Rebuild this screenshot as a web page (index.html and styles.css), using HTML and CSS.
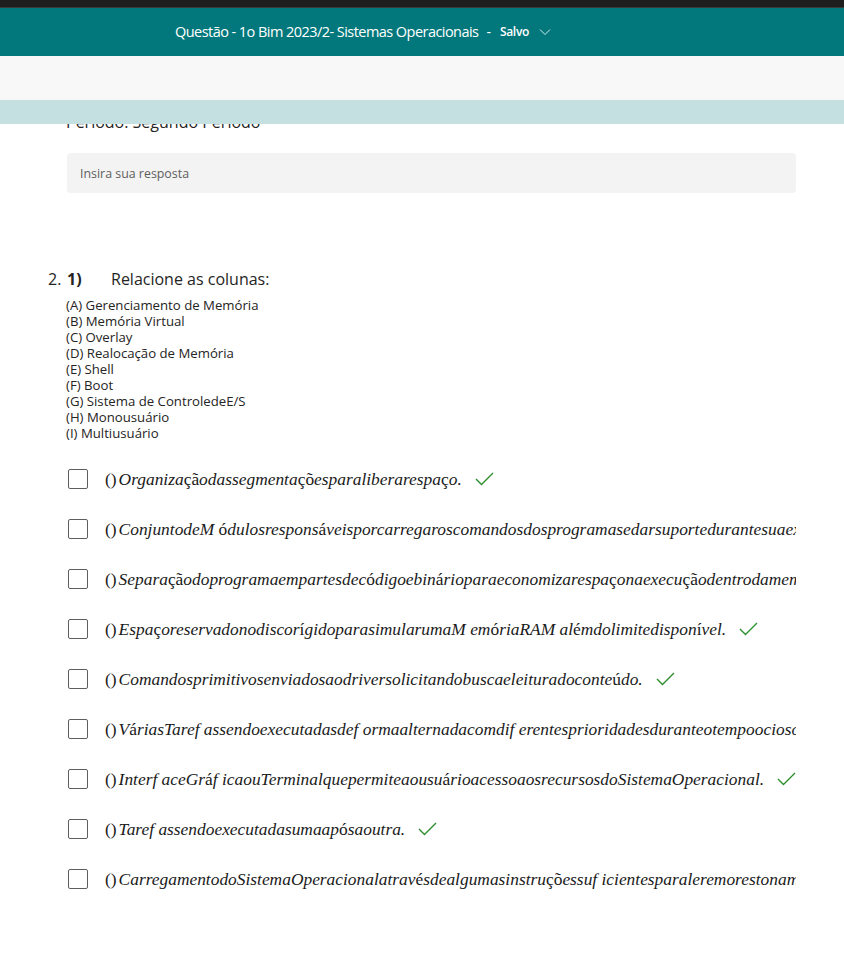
FILE: index.html
```html
<!DOCTYPE html>
<html lang="pt">
<head>
<meta charset="utf-8">
<title>Questão - 1o Bim 2023/2- Sistemas Operacionais</title>
<link rel="stylesheet" href="styles.css">
</head>
<body>
<div class="topstrip"></div>
<header class="titlebar">
  <span class="title">Questão - 1o Bim 2023/2- Sistemas Operacionais</span>
  <span class="sep">-</span>
  <span class="saved">Salvo</span>
  <svg class="chev" width="12" height="8" viewBox="0 0 12 8"><polyline points="1,1.5 6,6.5 11,1.5" fill="none" stroke="#d6ecec" stroke-width="1"/></svg>
</header>
<div class="ribbon"></div>
<main class="main">
  <div class="overlay-bar"></div>
  <div class="period">Período: Segundo Período</div>
  <div class="answer">Insira sua resposta</div>

  <section class="question">
    <div class="qhead">
      <span class="qnum">2.</span>
      <span class="qlabel">1)</span>
      <span class="qtitle">Relacione as colunas:</span>
    </div>
    <div class="legend">
      <div>(A) Gerenciamento de Memória</div>
      <div>(B) Memória Virtual</div>
      <div>(C) Overlay</div>
      <div>(D) Realocação de Memória</div>
      <div>(E) Shell</div>
      <div>(F) Boot</div>
      <div>(G) Sistema de ControledeE/S</div>
      <div>(H) Monousuário</div>
      <div>(I) Multiusuário</div>
    </div>
    <div class="options">
      <label class="opt"><span class="box"></span><span class="txt"><span class="par">()</span>Organiza<span class="up">çã</span>odassegmenta<span class="up">çõ</span>esparaliberarespa<span class="up">ç</span>o.<svg class="ok" width="19" height="14" viewBox="0 0 19 14"><polyline points="1,7 6.5,12.5 18,1" fill="none" stroke="#2c8f2c" stroke-width="1.4"/></svg></span></label>
      <label class="opt"><span class="box"></span><span class="txt"><span class="par">()</span>ConjuntodeM <span class="up">ó</span>dulosrespons<span class="up">á</span>veisporcarregaroscomandosdosprogramasedarsuportedurantesuaexecu<span class="up">çã</span>o.</span></label>
      <label class="opt"><span class="box"></span><span class="txt"><span class="par">()</span>Separa<span class="up">çã</span>odoprogramaempartesdec<span class="up">ó</span>digoebin<span class="up">á</span>rioparaeconomizarespa<span class="up">ç</span>onaexecu<span class="up">çã</span>odentrodamem<span class="up">ó</span>ria.</span></label>
      <label class="opt"><span class="box"></span><span class="txt"><span class="par">()</span>Espa<span class="up">ç</span>oreservadonodiscor<span class="up">í</span>gidoparasimularumaM em<span class="up">ó</span>riaRAM al<span class="up">é</span>mdolimitedispon<span class="up">í</span>vel.<svg class="ok" width="19" height="14" viewBox="0 0 19 14"><polyline points="1,7 6.5,12.5 18,1" fill="none" stroke="#2c8f2c" stroke-width="1.4"/></svg></span></label>
      <label class="opt"><span class="box"></span><span class="txt"><span class="par">()</span>Comandosprimitivosenviadosaodriversolicitandobuscaeleituradoconte<span class="up">ú</span>do.<svg class="ok" width="19" height="14" viewBox="0 0 19 14"><polyline points="1,7 6.5,12.5 18,1" fill="none" stroke="#2c8f2c" stroke-width="1.4"/></svg></span></label>
      <label class="opt"><span class="box"></span><span class="txt"><span class="par">()</span>V<span class="up">á</span>riasTaref assendoexecutadasdef ormaalternadacomdif erentesprioridadesduranteotempoociosodoprocessador.</span></label>
      <label class="opt"><span class="box"></span><span class="txt"><span class="par">()</span>Interf aceGr<span class="up">á</span>f icaouTerminalquepermiteaousu<span class="up">á</span>rioacessoaosrecursosdoSistemaOperacional.<svg class="ok" width="19" height="14" viewBox="0 0 19 14"><polyline points="1,7 6.5,12.5 18,1" fill="none" stroke="#2c8f2c" stroke-width="1.4"/></svg></span></label>
      <label class="opt"><span class="box"></span><span class="txt"><span class="par">()</span>Taref assendoexecutadasumaap<span class="up">ó</span>saoutra.<svg class="ok" width="19" height="14" viewBox="0 0 19 14"><polyline points="1,7 6.5,12.5 18,1" fill="none" stroke="#2c8f2c" stroke-width="1.4"/></svg></span></label>
      <label class="opt"><span class="box"></span><span class="txt"><span class="par">()</span>CarregamentodoSistemaOperacionalatrav<span class="up">é</span>sdealgumasinstru<span class="up">çõ</span>essuf icientesparaleremorestonamem<span class="up">ó</span>ria.</span></label>
    </div>
  </section>
</main>
</body>
</html>
```

FILE: styles.css
```css
* { box-sizing: border-box; }
html, body { margin: 0; padding: 0; background: #ffffff; }
body {
  font-family: "Segoe UI", "Open Sans", "Noto Sans", sans-serif;
  color: #252423;
  overflow: hidden;
}
.topstrip {
  height: 8px;
  background: #1e1e1e;
  border-bottom: 1px solid #3a3a3a;
}
.titlebar {
  height: 48px;
  background: #03787c;
  color: #ffffff;
  display: flex;
  align-items: center;
  padding-left: 175px;
  padding-bottom: 1px;
}
.title {
  font-size: 14.5px;
  letter-spacing: -0.55px;
}
.sep {
  font-size: 14px;
  margin: 0 9px 0 8px;
}
.saved {
  font-size: 12px;
  font-weight: 600;
  letter-spacing: -0.3px;
}
.chev { margin-left: 10px; margin-top: 1px; }
.ribbon {
  height: 44px;
  background: #f8f8f8;
}
.main {
  position: relative;
  padding: 10px 48px 0 67px;
}
.overlay-bar {
  position: absolute;
  left: 0;
  right: 0;
  top: 0;
  height: 24px;
  background: #c5e0e0;
}
.period {
  margin-left: -1px;
  font-size: 16px;
  line-height: 24px;
  color: #252423;
}
.answer {
  margin-top: 19px;
  height: 40px;
  background: #f3f3f3;
  border-radius: 4px;
  display: flex;
  align-items: center;
  padding-left: 13px;
  font-size: 12.4px;
  color: #605e5c;
}
.question { margin-top: 74px; }
.qhead {
  display: flex;
  align-items: baseline;
  margin-left: -19px;
  font-size: 16px;
  line-height: 24px;
}
.qnum { width: 19px; font-size: 16px; }
.qlabel { width: 44px; font-weight: 700; font-size: 16px; }
.qtitle { font-size: 16px; }
.legend {
  margin-top: 6px;
  margin-left: -1px;
  font-size: 13.2px;
  line-height: 16px;
}
.options {
  margin-top: 28px;
  display: flex;
  flex-direction: column;
  gap: 30px;
}
.opt {
  display: flex;
  align-items: center;
  height: 20px;
}
.box {
  flex: none;
  width: 20px;
  height: 20px;
  margin-left: 1px;
  border: 1px solid #605e5c;
  border-radius: 2px;
  background: #fff;
}
.txt {
  margin-left: 17px;
  min-width: 0;
  flex: 1;
  overflow: hidden;
  white-space: nowrap;
  font-family: "Liberation Serif", "Times New Roman", serif;
  font-style: italic;
  font-size: 17.4px;
  line-height: 20px;
  color: #1a1a1a;
}
.par { font-style: normal; margin-right: 2px; }
.up { font-style: normal; }
.ok {
  margin-left: 13px;
  vertical-align: -1px;
}
```
